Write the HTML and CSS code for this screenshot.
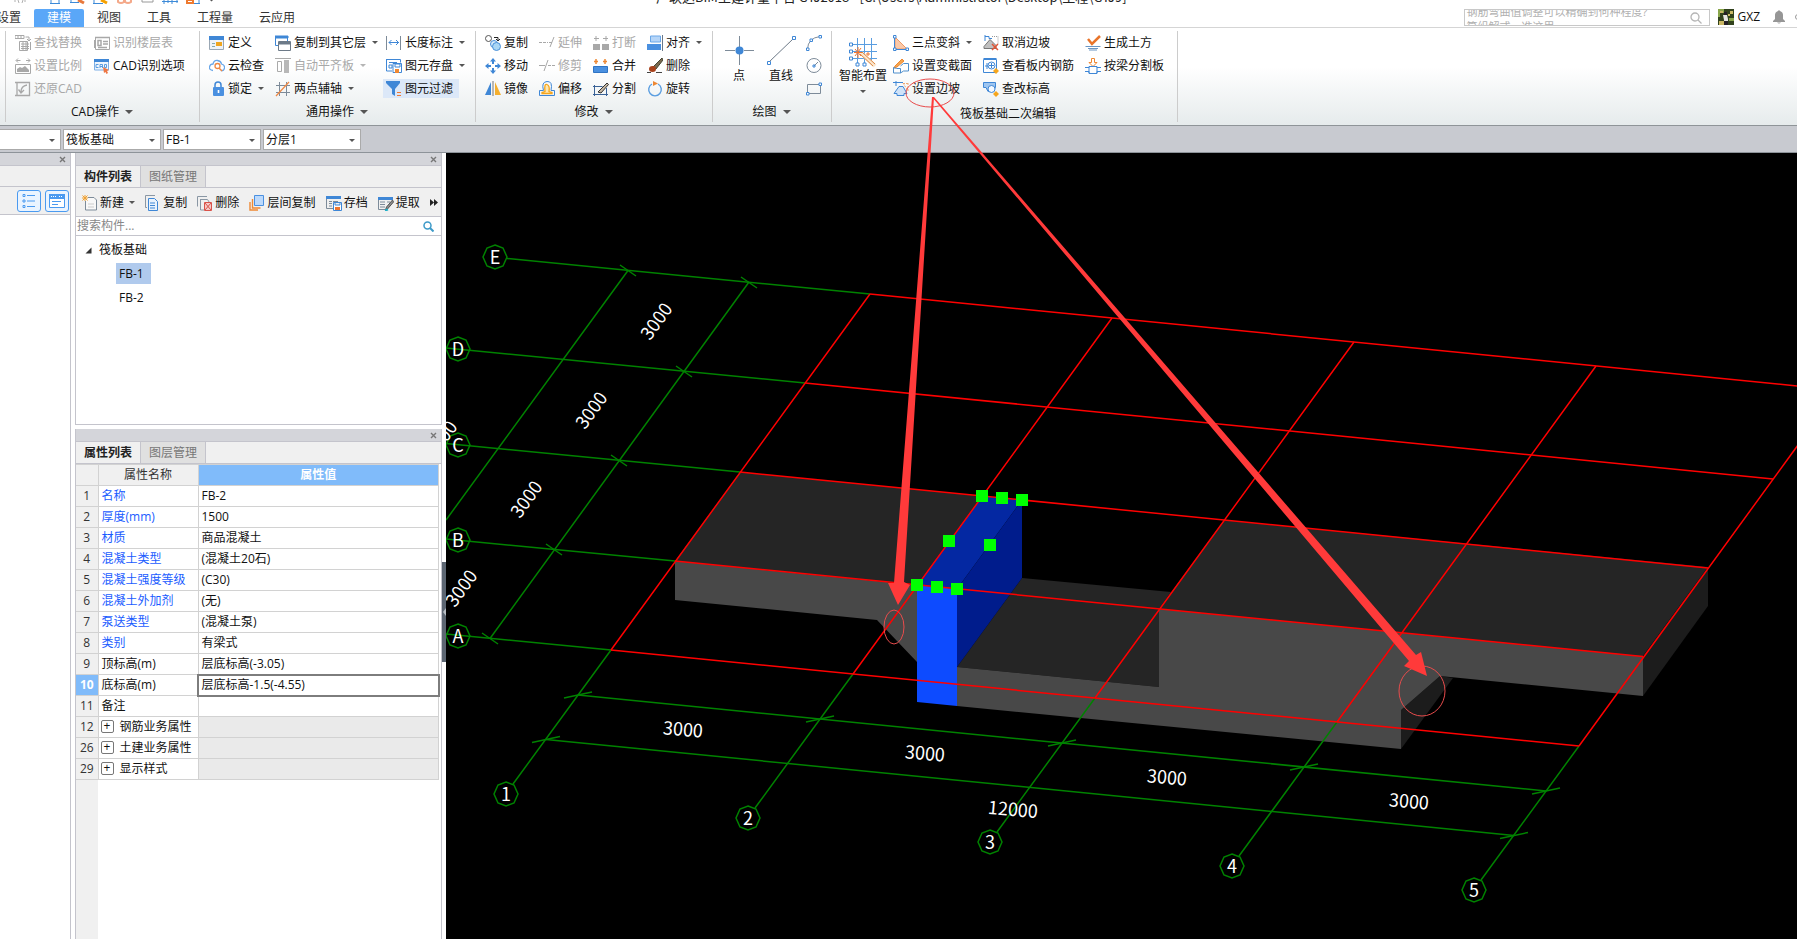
FILE: index.html
```
<!DOCTYPE html>
<html lang="zh-CN">
<head>
<meta charset="utf-8">
<title>广联达BIM土建计量平台 GTJ2018</title>
<link rel="stylesheet" href="styles.css">
</head>
<body>
<header class="titlebar">
  <svg class="quick" width="220" height="5" viewBox="0 0 220 5" aria-hidden="true">
    <g fill="none" stroke="#b0b0b0"><path d="M15 0v2M18 0l1 3M22 3l1-3M25 0v2"/></g>
    <g stroke="#3c8ad8" fill="none"><path d="M50 3.500h10M51 0v3M59 0v3M70 2.500h9M71 0v2M93 3.500h10M94 0v3M162 1.500h16M164 0v4M168 0v3M172 0v4M177 0v3M193 3.500h7M199 0v3"/></g>
    <path d="M78 0l6 3" stroke="#e8783a" stroke-width="3"/><path d="M101 0l6 3" stroke="#f5a000" stroke-width="3"/>
    <path d="M118 0v2q3 2 6 0v-2M125 0v2q3 2 6 0v-2" stroke="#f4a98a" fill="none" stroke-width="2"/>
    <path d="M142 0v2h11v-2" stroke="#999" fill="none"/><path d="M186 0h8v4h-8z" fill="#ee7a30"/><path d="M188 1.500h4" stroke="#fff"/><path d="M210 0h3l-1.500 1.500z" fill="#555"/>
  </svg>
  <span class="window-title">广联达BIM土建计量平台 GTJ2018 - [C:\Users\Administrator\Desktop\工程\GTJ9]</span>
</header>
<div class="menubar">
  <nav class="tabs">
    <button>设置</button><button class="on">建模</button><button>视图</button><button>工具</button><button>工程量</button><button>云应用</button>
  </nav>
  <div class="account">
    <div class="help"><input type="text" aria-label="搜索帮助"><span class="ticker">钢筋弯曲值调整可以精确到何种程度?<br>算组解式，准这里</span>
      <svg width="12" height="12" viewBox="0 0 12 12" fill="none" stroke="#b5b5b5" stroke-width="1.300"><circle cx="5" cy="5" r="4"/><path d="M8 8l3.500 3.500"/></svg></div>
    <svg class="avatar" width="16" height="16" viewBox="0 0 16 16"><rect width="16" height="16" fill="#31421c"/><path d="M0 0h6v4H2v4H0zM11 9h5v3h-5z" fill="#89a64a"/><path d="M2 2h3v2H2zM12 2h3v3h-3zM1 12h5v4H1zM10 5h2v2h-2z" fill="#c9b765"/><path d="M5 6h4l1 4v6H6v-5z" fill="#e7e7e2"/><path d="M6 3h3v3H6zM6 12h4v4H6z" fill="#252026"/></svg>
    <button class="user">GXZ</button>
    <svg class="bell" width="12" height="14" viewBox="0 0 12 14" fill="#969696"><path d="M6 0l1 1q3 1 3 4v4l2 2v1H0v-1l2-2V5q0-3 3-4zM4 12.500h4q-2 2-4 0z"/></svg>
    <svg class="edge" width="2" height="6" viewBox="0 0 2 6"><circle cx="3" cy="3" r="2.500" fill="none" stroke="#999"/></svg>
  </div>
</div>

<div class="ribbon">
  <section class="group g-cad">
    <div class="cmds">
      <button disabled><svg class="ic" viewBox="0 0 16 16" fill="none" stroke="#a8a8a8"><path d="M0 .5h9v3H0zM3 1v2M6 1v2M10.500 2h3.500v3M12 4l2 2 2-2M4.500 6.500h8v9h-8zM6 9h8M6 11.500h8M6 13.500h8M8 7v8M11 7v8M15.500 7v8"/></svg>查找替换</button>
      <button disabled><svg class="ic" viewBox="0 0 16 16" fill="none" stroke="#a8a8a8"><path d="M1.500 2.500h14v12h-14z"/><path d="M1 2.500h15M4 5.500h3v5H4zM9 6.500h5M9 9h5M4 12.500h9" stroke-width="1.500"/><path d="M0 5v8" stroke-width="2"/></svg>识别楼层表</button>
      <button disabled><svg class="ic" viewBox="0 0 16 16" fill="none" stroke="#a8a8a8"><path d="M1.500 2.500h4M3 .5L1 2.500l2 2M15 2.500h-4M13 .5l2 2-2 2M.5 6.500h15v9H.5z"/><path d="M2 14v-3l3-2 2 1 3-2 4 4v2z" fill="#a8a8a8" stroke="none"/></svg>设置比例</button>
      <button><svg class="ic" viewBox="0 0 16 16"><path d="M.5 4v8h14V4" fill="#eef5fd" stroke="#7fb0e6"/><path d="M0 1h15v3H0z" fill="#3f87d6"/><path d="M4.500 6.500H2v3h2.500M6 10V6.500h2.500V10M6 8.500h2.500M10.500 6.500h2v3h-2z" fill="none" stroke="#5a9de0"/><path d="M9 9l6 3-2 1 1 2-1.500 1-1-2-1.500 1z" fill="#ee7744"/></svg>CAD识别选项</button>
      <button disabled><svg class="ic" viewBox="0 0 16 16" fill="none" stroke="#a8a8a8"><path d="M2 1.500h12.500v13H2zM0 1.500h2M0 14.500h2M12 4q-6 1-6 7M3.500 8.500L6 12l3-3" stroke-width="1.300"/></svg>还原CAD</button>
    </div>
    <button class="label">CAD操作<i class="dd"></i></button>
  </section>
  <section class="group g-common">
    <div class="cmds">
      <button><svg class="ic" viewBox="0 0 16 16"><path d="M.5 1.500h14v13H.5z" fill="#eef2f6" stroke="#9aa7b4"/><path d="M0 1h15v4H0z" fill="#3f87d6"/><path d="M3 8.500h3M3 11.500h3" stroke="#8aa"/><path d="M7 7h6v4H7z" fill="#f0a51c"/></svg>定义</button>
      <button><svg class="ic" viewBox="0 0 16 16" fill="#fff" stroke="#6d7a88"><path d="M.5 1.500h12v9H.500z" stroke="#3f87d6"/><path d="M0 1h13v2H0z" fill="#3f87d6" stroke="#3f87d6"/><path d="M3.500 6.500h12v9h-12z"/><path d="M4 7h11v2H4z" fill="#6d7a88"/></svg>复制到其它层<i class="dd"></i></button>
      <button><svg class="ic" viewBox="0 0 16 16" fill="none" stroke="#3f87d6"><path d="M.5 1v14M14.500 1v14" stroke="#7d8b99"/><path d="M3 7.500h10M5.500 5L3 7.500 5.500 10M10 5l2.500 2.500L10 10"/></svg>长度标注<i class="dd"></i></button>
      <button><svg class="ic" viewBox="0 0 16 16" fill="none"><path d="M4 12.500Q0 12 .5 9T4 6q1-4 4.500-3.500T12.500 6Q16 7 15.500 10T12 12.500" stroke="#6aa7e8" stroke-width="1.300"/><circle cx="8.500" cy="8" r="2.500" stroke="#ee8844" stroke-width="1.300"/><path d="M10 10l3 3" stroke="#ee8844" stroke-width="1.500"/></svg>云检查</button>
      <button disabled><svg class="ic" viewBox="0 0 16 16"><path d="M0 .5h16" stroke="#aaa"/><path d="M2.500 3.500h4v10h-4z" fill="none" stroke="#aaa"/><path d="M9 2h5v13H9z" fill="#b8b8b8"/></svg>自动平齐板<i class="dd"></i></button>
      <button><svg class="ic" viewBox="0 0 16 16" fill="none" stroke="#3f87d6"><path d="M.5 1.500h14v3M.5 1v12H6M3 4.500h8M3 7v3h3V7z"/><path d="M7 5.500h8.500v9H7z" fill="#fff"/><path d="M9 6h5v3H9z"/><path d="M9 11h4v4H9z" fill="#ee8833" stroke="none"/></svg>图元存盘<i class="dd"></i></button>
      <button><svg class="ic" viewBox="0 0 16 16"><path d="M6 7V4q0-3 3-3t3 3v3" fill="none" stroke="#3f87d6" stroke-width="1.500"/><rect x="4" y="6" width="11" height="9" rx="1" fill="#4a90e0"/><path d="M9.500 9v3" stroke="#fff" stroke-width="1.600"/></svg>锁定<i class="dd"></i></button>
      <button><svg class="ic" viewBox="0 0 16 16" fill="none" stroke="#7d8b99"><path d="M4.500 1v14M11.500 1v14M1 4.500h14M1 11.500h14"/><path d="M1 15L14 1" stroke="#ee8844" stroke-width="1.300"/></svg>两点辅轴<i class="dd"></i></button>
      <button class="sel"><svg class="ic" viewBox="0 0 16 16" fill="#3f87d6"><path d="M0 0h14v2L9 8v7l-3-2V8L0 2z"/><path d="M11 11.500h4M11 14.500h4" stroke="#ee7733"/></svg>图元过滤</button>
    </div>
    <button class="label">通用操作<i class="dd"></i></button>
  </section>
  <section class="group g-edit">
    <div class="cmds">
      <button><svg class="ic" viewBox="0 0 16 16" fill="none" stroke="#555"><circle cx="3.500" cy="3.500" r="3"/><path d="M9 2.500h4v3M11 4l2 2 2-2" stroke="#222"/><circle cx="9" cy="9" r="3.500" stroke="#4a90d9" fill="#d8ecfb"/><circle cx="11.500" cy="11.500" r="4" stroke="#4a90d9" fill="#a9d6f4"/></svg>复制</button>
      <button disabled><svg class="ic" viewBox="0 0 16 16" fill="none" stroke="#a8a8a8"><path d="M0 7.500h9" stroke-dasharray="3 1"/><path d="M10 7.500h3M15 2l-4 10"/></svg>延伸</button>
      <button disabled><svg class="ic" viewBox="0 0 16 16" fill="#a8a8a8"><path d="M0 9h7v6H0zM9 9h7v6H9z"/><path d="M1 3.500h5M3 1v5M10 3.500h5M13 1v5" stroke="#a8a8a8"/></svg>打断</button>
      <button><svg class="ic" viewBox="0 0 16 16"><path d="M3.500 1h10v6h-10z" fill="#b5d5f8" stroke="#6aa7e8"/><path d="M0 9h14v6H0z" fill="#4a90e0"/><path d="M15.500 0v16" stroke="#68788a"/></svg>对齐<i class="dd"></i></button>
      <button><svg class="ic" viewBox="0 0 16 16" fill="#3f87d6"><path d="M8 0l3 3.500H9V6H7V3.500H5zM8 16l3-3.500H9V10H7v2.500H5zM0 8l3.500-3v2H6v2H3.500v2zM16 8l-3.500-3v2H10v2h2.500v2z"/></svg>移动</button>
      <button disabled><svg class="ic" viewBox="0 0 16 16" fill="none" stroke="#a8a8a8"><path d="M0 7.500h6M9 2L5 13"/><path d="M9 7.500h7" stroke-dasharray="3 1"/></svg>修剪</button>
      <button><svg class="ic" viewBox="0 0 16 16"><path d="M.5 8.500h14v6H.5z" fill="#4a90e0" stroke="#2f74c4"/><path d="M1 3.500h4M3 1v5M10 3.500h4M12 1v5" stroke="#ee8833" stroke-width="1.500"/></svg>合并</button>
      <button><svg class="ic" viewBox="0 0 16 16"><path d="M15 0l1 2-7 9-3-2z" fill="#7a6a50" stroke="#443"/><ellipse cx="5.500" cy="11" rx="3.500" ry="3" fill="#a8421c"/><path d="M0 14.500h4M9 14.500h6" stroke="#444"/></svg>删除</button>
      <button><svg class="ic" viewBox="0 0 16 16"><path d="M6 1v13H0z" fill="#3f87d6"/><path d="M10 1v13h6z" fill="#f5b030"/><path d="M8 0v15" stroke="#777"/></svg>镜像</button>
      <button><svg class="ic" viewBox="0 0 16 16" fill="none" stroke="#3f87d6"><path d="M.5 14.500v-5h4Q2 1 8 .500t4 9h3.500v5z"/><path d="M3 12.500h10v-1l-3-1q1-6-2-7T6 10.500l-3 1z" fill="#ffe7b0" stroke="#f5a51c" stroke-width="1.300"/></svg>偏移</button>
      <button><svg class="ic" viewBox="0 0 16 16" fill="none" stroke="#3a6297"><path d="M1.500 5.500h8M1.500 4v11M0 13.500h15M13.500 7v8M0 5.500h2"/><path d="M5 11l9-9 1.500 1.500L8 12z" fill="#c6b8a4" stroke="#333"/></svg>分割</button>
      <button><svg class="ic" viewBox="0 0 16 16" fill="none"><path d="M11 3a6.300 6.300 0 1 1-6 0" stroke="#5a9de0" stroke-width="1.400"/><path d="M6 0l5 2.500L6 5z" fill="#ee8833"/></svg>旋转</button>
    </div>
    <button class="label">修改<i class="dd"></i></button>
  </section>
  <section class="group g-draw">
    <div class="big-row">
      <button class="big"><svg width="30" height="34" viewBox="0 0 30 34"><path d="M15.500 2v29M1 16.500h10M20 16.500h10" stroke="#7d8b99"/><circle cx="15.500" cy="16.500" r="4" fill="#3f87d6"/></svg>点</button>
      <button class="big"><svg width="30" height="34" viewBox="0 0 30 34" fill="none"><path d="M3 28L27 5" stroke="#6d7a88"/><path d="M1.500 27.500h3v3h-3zM26.500 2.500h3v3h-3z" fill="#fff" stroke="#3f87d6"/></svg>直线</button>
      <div class="minis">
        <button aria-label="弧"><svg class="ic" viewBox="0 0 16 16" fill="none"><path d="M1.500 14Q2 3 14 1.500" stroke="#7d8b99"/><path d="M.5 13h2.500v2.500H.5zM4 4h2.500v2.500H4zM13 .5h2.500V3H13z" fill="#fff" stroke="#3f87d6"/></svg></button>
        <button aria-label="圆"><svg class="ic" viewBox="0 0 16 16" fill="none"><circle cx="8" cy="7.500" r="7" stroke="#7d8b99"/><path d="M8 8l4-4" stroke="#7d8b99"/><path d="M7 7h2v2H7z" stroke="#3f87d6"/></svg></button>
        <button aria-label="矩形"><svg class="ic" viewBox="0 0 16 16" fill="none"><path d="M1.500 3.500h13v9h-13z" stroke="#7d8b99"/><path d="M.5 11.500h2.500V14H.5zM13 2h2.500v2.500H13z" fill="#fff" stroke="#3f87d6"/></svg></button>
      </div>
    </div>
    <button class="label">绘图<i class="dd"></i></button>
  </section>
  <section class="group g-raft">
    <div class="big-row">
      <button class="big"><svg width="32" height="34" viewBox="0 0 32 34" fill="none"><path d="M5 10.500h25M5 17.500h25M5 24.500h25M10.500 4v25M17.500 4v25M24.500 4v25" stroke="#5a9de0"/><path d="M2.500 9h3v3h-3zM2.500 16h3v3h-3zM2.500 23h3v3h-3zM9 29h3v3H9zM16 29h3v3h-3z" fill="#fff" stroke="#3f87d6"/><path d="M14 19l14 13" stroke="#fbe6cc" stroke-width="4"/><path d="M13 20l13 12M15 18l13 12" stroke="#dd8844"/><path d="M8 15l6 7M14 14l-6 8M7 18.500h8M11 13v11M19 20h4M21 18v4" stroke="#ee7733"/></svg>智能布置<i class="dd"></i></button>
      <div class="cmds">
        <button><svg class="ic" viewBox="0 0 16 16"><path d="M2 2v12h12z" fill="#fbc9a8" stroke="#ee9966"/><path d="M.5.500H3V3H.500zM.5 13H3v2.500H.500zM13 13h2.500v2.500H13zM1.500 3v10M3 14.500h10" fill="#fff" stroke="#3f87d6"/></svg>三点变斜<i class="dd"></i></button>
        <button><svg class="ic" viewBox="0 0 16 16" fill="none" stroke="#3f87d6"><path d="M2 1.500h4v2h3M2 0v6"/><path d="M1 11.500l6-7 6 6v3H1z" fill="#c0c0c0" stroke="#777"/><path d="M9 1.500h6v8" stroke="#999" stroke-dasharray="1 1"/><path d="M9 9l6 6M15 9l-6 6" stroke="#e05535" stroke-width="1.500"/></svg>取消边坡</button>
        <button><svg class="ic" viewBox="0 0 16 16" fill="none"><path d="M3 4l4 5 8-8" stroke="#e8742a" stroke-width="2.500"/><path d="M.5 11.500h15M3 13.500h10M4 15h8" stroke="#6a96c4"/></svg>生成土方</button>
        <button><svg class="ic" viewBox="0 0 16 16" fill="none"><path d="M2 8l7-7 2 2-7 6-3 1z" stroke="#ee8833" fill="#f5a64d"/><path d="M.5 9.500l3 1h4V15H.5zM7.500 8l3-2.500h5V13h-5l-3 2" stroke="#4f8fcc"/></svg>设置变截面</button>
        <button><svg class="ic" viewBox="0 0 16 16" fill="none" stroke="#3f87d6"><path d="M.5 1.500h13v13H.5zM.5 .5h13M4 5v6M2 8h4"/><circle cx="8.500" cy="7.500" r="3.500" fill="#fff"/><path d="M8.500 5v5M6 7.500h5"/><path d="M13 10l3 3-3 3-3-3z" fill="#f5a51c" stroke="none"/></svg>查看板内钢筋</button>
        <button><svg class="ic" viewBox="0 0 16 16" fill="none"><path d="M6.500 1v3.500H4l4 4 4-4H9.500V.5h-3z" stroke="#ee8833"/><path d="M0 9.500h4v-1h8v1h4M0 13.500h4v2h8v-2h4M4 9v6M12 9v6" stroke="#3f87d6"/></svg>按梁分割板</button>
        <button><svg class="ic" viewBox="0 0 16 16" fill="none" stroke="#3f87d6"><path d="M0 1.500h10M3 0v5"/><path d="M1 12.500l5-7h4l4 7h-3v2H4v-2z" fill="#d0e3f8"/><path d="M10 2l5 8M10 2.500h6M15 2v8" stroke="#eeaa77" stroke-dasharray="2 1"/></svg>设置边坡</button>
        <button><svg class="ic" viewBox="0 0 16 16" fill="none" stroke="#3f87d6"><path d="M.5 1.500h12v5l-3 4H5l-2-4H.5z" fill="#9fc6f0"/><circle cx="8.500" cy="8" r="3.500" fill="#f4f9ff"/><path d="M13 10l3 3-3 3-3-3z" fill="#f5a51c" stroke="none"/></svg>查改标高</button>
      </div>
    </div>
    <span class="label">筏板基础二次编辑</span>
  </section>
</div>

<div class="selectors">
  <div class="combo first"><select aria-label="楼层"><option></option></select></div>
  <div class="combo"><select aria-label="构件类型"><option>筏板基础</option></select></div>
  <div class="combo"><select aria-label="构件"><option>FB-1</option></select></div>
  <div class="combo"><select aria-label="分层"><option>分层1</option></select></div>
</div>

<main class="workspace">
  <aside class="nav-panel">
    <div class="strip"><button aria-label="关闭"><svg width="7" height="7" viewBox="0 0 7 7"><path d="M1 1l5 5M6 1L1 6" stroke="#777" stroke-width="1.400"/></svg></button></div>
    <div class="nav-head"></div>
    <div class="nav-tools">
      <button aria-label="列表"><svg width="14" height="14" viewBox="0 0 14 14" fill="none" stroke="#4a9af0"><path d="M1 .5h2v2H1zM1 6h2v2H1zM1 11.500h2v2H1zM5 1.500h8M5 7h8M5 12.500h8"/></svg></button>
      <button aria-label="卡片"><svg width="16" height="14" viewBox="0 0 16 14" fill="none" stroke="#4a9af0"><path d="M.5 .5h15v13H.5z" fill="#fff"/><path d="M0 0h16v5H0z" fill="#4a9af0" stroke="none"/><path d="M2 2.500h5M10 2.500h3" stroke="#fff" stroke-dasharray="1 1"/><path d="M3 7.500h9M3 10.500h6"/></svg></button>
    </div>
  </aside>

  <div class="docks">
    <section class="dock dock-list">
      <div class="strip"><button aria-label="关闭"><svg width="7" height="7" viewBox="0 0 7 7"><path d="M1 1l5 5M6 1L1 6" stroke="#777" stroke-width="1.400"/></svg></button></div>
      <div class="dock-tabs"><button class="on">构件列表</button><button>图纸管理</button></div>
      <div class="dock-tools">
        <button><svg class="ic" viewBox="0 0 16 16" fill="none" stroke="#7d8b99"><path d="M6 2.500h6l2.500 2.500v10h-11V6" fill="#f8f8f8"/><path d="M6 9h6M6 12h6" stroke="#ccc"/><path d="M.5 .5l5 5M5.500.5l-5 5M3 0v6M0 3h6" stroke="#f0a030"/></svg>新建<i class="dd"></i></button>
        <button><svg class="ic" viewBox="0 0 16 16" fill="none" stroke="#3f87d6"><path d="M10 .5H.5v12H2" stroke="#8a97a4"/><path d="M3.500 3.500h6l3 3v9h-9z" fill="#e8f2fd"/><path d="M5 8h5M5 10.500h5M5 13h5"/></svg>复制</button>
        <button><svg class="ic" viewBox="0 0 16 16" fill="none" stroke="#8a97a4"><path d="M10 1.500H.5v10M3.500 4.500h7l2 3M3.500 4v11H7"/><path d="M7.500 7.500h7v8h-7z" fill="#f7c9c6" stroke="#d9534a"/><path d="M8 8l6 7M14 8l-6 7" stroke="#d9534a"/></svg>删除</button>
        <button><svg class="ic" viewBox="0 0 16 16" fill="none"><path d="M5.500 .5h9v10h-9z" fill="#bcd9fb" stroke="#4a90e0"/><path d="M3.500 4v9h8M1 7v8h8" stroke="#ee8833" stroke-width="1.400"/></svg>层间复制</button>
        <button><svg class="ic" viewBox="0 0 16 16" fill="none" stroke="#7d8b99"><path d="M.5 1v12.500H7M3 6.500h3M3 8.500h3M3 11h3M7 6.500h5"/><path d="M0 1h15v3H0z" fill="#3f87d6" stroke="none"/><path d="M7.500 7.500h8v8h-8zM9 8v2h5V8" fill="#fff" stroke="#3f87d6"/><path d="M9 12h5v3H9z" fill="#ee7733" stroke="none"/></svg>存档</button>
        <button><svg class="ic" viewBox="0 0 16 16" fill="none" stroke="#7d8b99"><path d="M.5 3v11.500H8M2 7h5M2 9.500h5M2 12h5M9 7h3"/><path d="M0 2h15v3H0z" fill="#3f87d6" stroke="none"/><path d="M14.500 5l1 2-6 7-2 1 1-3z" fill="#8b8b8b" stroke="#555"/><path d="M7 15.500l3-1" stroke="#20b0c8" stroke-width="2"/></svg>提取</button>
        <button class="more" aria-label="更多"><svg width="8" height="7" viewBox="0 0 8 7" fill="#222"><path d="M0 0l4 3.500L0 7zM4 0l4 3.500L4 7z"/></svg></button>
      </div>
      <label class="search"><input type="text" placeholder="搜索构件..." aria-label="搜索构件"><svg width="11" height="11" viewBox="0 0 11 11" fill="none" stroke="#3d9ac8"><circle cx="4.500" cy="4.500" r="3.500" stroke-width="1.500"/><path d="M7 7l3.500 3.500" stroke-width="2"/></svg></label>
      <ul class="tree">
        <li><svg width="7" height="7" viewBox="0 0 7 7"><path d="M6.500 .5v6h-6z" fill="#333"/></svg><span>筏板基础</span>
          <ul><li><button class="picked">FB-1</button></li><li><button>FB-2</button></li></ul>
        </li>
      </ul>
    </section>

    <section class="dock dock-props">
      <div class="strip"><button aria-label="关闭"><svg width="7" height="7" viewBox="0 0 7 7"><path d="M1 1l5 5M6 1L1 6" stroke="#777" stroke-width="1.400"/></svg></button></div>
      <div class="dock-tabs"><button class="on">属性列表</button><button>图层管理</button></div>
      <div class="props-body">
      <table class="props">
        <colgroup><col class="c-num"><col class="c-name"><col></colgroup>
        <thead><tr><th></th><th>属性名称</th><th class="hot">属性值</th></tr></thead>
        <tbody>
          <tr><th>1</th><td class="blue">名称</td><td>FB-2</td></tr>
          <tr><th>2</th><td class="blue">厚度(mm)</td><td>1500</td></tr>
          <tr><th>3</th><td class="blue">材质</td><td>商品混凝土</td></tr>
          <tr><th>4</th><td class="blue">混凝土类型</td><td>(混凝土20石)</td></tr>
          <tr><th>5</th><td class="blue">混凝土强度等级</td><td>(C30)</td></tr>
          <tr><th>6</th><td class="blue">混凝土外加剂</td><td>(无)</td></tr>
          <tr><th>7</th><td class="blue">泵送类型</td><td>(混凝土泵)</td></tr>
          <tr><th>8</th><td class="blue">类别</td><td>有梁式</td></tr>
          <tr><th>9</th><td>顶标高(m)</td><td>层底标高(-3.05)</td></tr>
          <tr class="current"><th>10</th><td>底标高(m)</td><td>层底标高-1.5(-4.55)</td></tr>
          <tr><th>11</th><td>备注</td><td></td></tr>
          <tr class="fold"><th>12</th><td><button aria-label="展开">+</button>钢筋业务属性</td><td></td></tr>
          <tr class="fold"><th>26</th><td><button aria-label="展开">+</button>土建业务属性</td><td></td></tr>
          <tr class="fold"><th>29</th><td><button aria-label="展开">+</button>显示样式</td><td></td></tr>
        </tbody>
      </table>
      </div>
    </section>
  </div>

  <div class="splitter"><button aria-label="收起"><svg width="4" height="8" viewBox="0 0 4 8"><path d="M4 0v8L1 4z" fill="#b8bec4"/></svg></button></div>

  <div class="viewport">
    <svg viewBox="446 153 1351 786" preserveAspectRatio="xMinYMin slice">
      <polygon points="675,561 740,472 982,496 917,585" fill="#252525"/>
      <polygon points="1159,609 1224,520 1708,567 1643,656" fill="#252525"/>
      <polygon points="957,667 1022,578 1171,592 1159,609 1159,687" fill="#252525"/>
      <polygon points="1708,567 1708,606 1643,696 1643,656" fill="#1c1c1c"/>
      <polygon points="1440,676 1453,678 1401,749 1401,710" fill="#1c1c1c"/>
      <polygon points="675,561 917,585 917,662 877,620 675,600" fill="#484848"/>
      <polygon points="957,667 1159,687 1159,609 1643,656 1643,696 1440,676 1401,710 1401,749 957,706" fill="#484848"/>
      <polygon points="917,585 982,496 1022,500 957,589" fill="#0428a2"/>
      <polygon points="1022,500 1022,578 957,667 957,589" fill="#001c8c"/>
      <polygon points="917,585 957,589 957,706 917,702" fill="#0d4bff"/>
      <g class="axis">
        <path d="M507 258.500L870 294M446 348L805 383M446 443.500L740 472M446 539L675 561M446 634L611 650"/>
        <path d="M628 270.500L446 520M749 282L490 638.500"/>
        <path d="M611 650L513 784M853 674L755 808M1095 698L997 832M1337 722L1239 856M1579 746L1481 880"/>
        <path d="M578 695L1546 791M546 739.500L1514 835.500"/>
        <path d="M620 265l16 11M741 277l16 11M676 366l16 11M611 455l16 11M546 544l16 11M482 633l16 11"/>
        <path d="M564 698l28-6M806 722l28-6M1048 746l28-6M1290 770l28-6M1532 794l28-6M532 742.500l28-6M1500 838.500l28-6"/>
      </g>
      <g class="grid">
        <path d="M870 294L1838 390M805 383L1773 479M740 472L1708 568M675 561L1643 656.500M611 650L1579 746"/>
        <path d="M611 650L870 294M853 674L1112 318M1095 698L1354 342M1337 722L1596 366M1579 746L1838 390"/>
      </g>
      <g class="axis">
        <path id="b" d="M495 245l8 3 4 9-4 9-8 3-8-3-4-9 4-9z"/>
        <use href="#b" x="-37" y="92"/><use href="#b" x="-37" y="188"/><use href="#b" x="-37" y="283"/><use href="#b" x="-37" y="379"/>
        <use href="#b" x="11" y="537"/><use href="#b" x="253" y="561"/><use href="#b" x="495" y="585"/><use href="#b" x="737" y="609"/><use href="#b" x="979" y="633"/>
      </g>
      <g class="marks">
        <text x="495" y="264">E</text><text x="458" y="356">D</text><text x="458" y="452">C</text><text x="458" y="547">B</text><text x="458" y="643">A</text>
        <text x="506" y="801">1</text><text x="748" y="825">2</text><text x="990" y="849">3</text><text x="1232" y="873">4</text><text x="1474" y="897">5</text>
        <text transform="translate(656 321) rotate(-54)" y="7">3000</text><text transform="translate(591 410) rotate(-54)" y="7">3000</text><text transform="translate(526 499) rotate(-54)" y="7">3000</text><text transform="translate(461 588) rotate(-54)" y="7">3000</text><text transform="translate(438 443) rotate(-54)" y="7">12000</text>
        <text transform="translate(683 729) rotate(5)" y="7">3000</text><text transform="translate(925 753) rotate(5)" y="7">3000</text><text transform="translate(1167 777) rotate(5)" y="7">3000</text><text transform="translate(1409 801) rotate(5)" y="7">3000</text><text transform="translate(1013 809) rotate(5)" y="7">12000</text>
      </g>
      <path class="grips" d="M976 490h12v12h-12zM996 492h12v12h-12zM1016 494h12v12h-12zM943 535h12v12h-12zM984 539h12v12h-12zM911 579h12v12h-12zM931 581h12v12h-12zM951 583h12v12h-12z"/>
    </svg>
  </div>
</main>

<svg class="notes" width="1797" height="939" viewBox="0 0 1797 939" aria-hidden="true">
  <g fill="none" stroke="#e84c4c"><ellipse cx="930" cy="93" rx="24" ry="14"/><ellipse cx="894" cy="627" rx="10" ry="17"/><ellipse cx="1422" cy="691" rx="23" ry="25"/></g>
  <g fill="#ff3a3a"><polygon points="932,97 934,97 904,582 910,585 898,605 888,583 894,583"/><polygon points="932,97 934,97 1416,655 1421,652 1427,676 1404,666 1409,661"/></g>
</svg>
</body>
</html>
```
FILE: styles.css
```
* { box-sizing: border-box; }

body {
  margin: 0;
  min-height: 100vh;
  display: flex;
  flex-direction: column;
  position: relative;
  overflow: hidden;
  background: #fff;
  color: #111;
  font: 12px/16px "Open Sans", "Noto Sans CJK SC", sans-serif;
}

button, input, select {
  margin: 0;
  padding: 0;
  border: 0;
  background: none;
  color: inherit;
  font: inherit;
}

svg { display: block; flex: none; }
.ic { width: 16px; height: 16px; }

.dd {
  flex: none;
  border: 3px solid transparent;
  border-top-color: #555;
  border-bottom: 0;
}

/* Title and menu */
.titlebar { display: flex; align-items: flex-end; height: 5px; overflow: hidden; }
.titlebar .quick { width: 220px; }
.window-title { margin-left: 436px; font-family: "Noto Sans CJK SC", sans-serif; font-size: 13px; line-height: 17px; color: #222; white-space: nowrap; }

.menubar { display: flex; justify-content: space-between; height: 23px; border-bottom: 1px solid #d5d5d5; }
.tabs { display: flex; margin: 4px 0 0 -16px; }
.tabs button { padding: 0 13px; color: #333; }
.tabs .on { background: #5aa7f8; color: #fff; border-radius: 2px 2px 0 0; }

.account { display: flex; align-items: center; padding-top: 2px; }
.help { position: relative; display: flex; width: 246px; height: 17px; border: 1px solid #c8c8c8; overflow: hidden; margin-right: 8px; }
.help input { width: 100%; }
.help .ticker { position: absolute; left: 1px; top: -6px; font-size: 11px; line-height: 15px; color: #b0b0b0; white-space: nowrap; pointer-events: none; }
.help svg { position: absolute; right: 7px; top: 2px; }
.user { margin: 0 13px 0 3px; }
.edge { margin-left: 10px; }

/* Ribbon */
.ribbon {
  display: flex;
  height: 98px;
  padding: 3px 0 0 5px;
  background: linear-gradient(#fff 40%, #e6ebec);
  border-bottom: 1px solid #8f9498;
}
.group { display: flex; flex-direction: column; border-right: 1px solid #ccc; height: 91px; padding-left: 9px; }
.group:first-child { border-left: 1px solid #ccc; }
.cmds { display: grid; grid-auto-rows: 23px; align-items: center; justify-items: start; }
.cmds button { display: flex; align-items: center; gap: 3px; height: 19px; white-space: nowrap; }
.cmds .dd { margin-left: 3px; }
.cmds button:disabled { color: #a8a8a8; }
.cmds button:disabled .dd { border-top-color: #b5b5b5; }
.cmds .sel { margin-left: -3px; padding: 0 6px 0 3px; background: #dce8f8; }
.label { display: flex; align-items: center; justify-content: center; gap: 6px; height: 25px; margin: 2px 0 0 -10px; }
.label .dd { border-width: 4px 4px 0; }

.g-cad { width: 195px; }
.g-cad .cmds { grid-template-columns: 79px 1fr; }
.g-common { width: 276px; }
.g-common .cmds { grid-template-columns: 66px 111px 1fr; }
.g-edit { width: 237px; }
.g-edit .cmds { grid-template-columns: 54px 54px 54px 1fr; }
.g-draw { width: 119px; }
.g-raft { width: 346px; padding-left: 7px; }
.g-raft .cmds { grid-template-columns: 90px 102px 1fr; }
.g-raft .label { margin: 5px 0 0; }

.big-row { display: flex; height: 69px; }
.big { display: flex; flex-direction: column; align-items: center; padding-top: 3px; }
.big .dd { margin-top: 6px; }
.g-draw .big { width: 34px; margin-right: 8px; }
.minis { display: grid; grid-auto-rows: 23px; align-items: center; }
.g-raft .big { width: 48px; margin-right: 6px; }

/* Component selectors */
.selectors { display: flex; gap: 2px; height: 27px; padding: 3px 0 2px; background: #c8cad0; border-bottom: 1px solid #8d9399; }
.combo { position: relative; width: 98px; border: 1px solid #aaa; background: #fff; }
.combo.first { width: 61px; border-left: 0; }
.combo select { appearance: none; width: 100%; height: 100%; padding-left: 2px; }
.combo::after { content: ""; position: absolute; right: 5px; top: 9px; border: 3px solid transparent; border-top-color: #555; border-bottom: 0; pointer-events: none; }

/* Panels */
.workspace { display: flex; flex: 1; min-height: 0; }
.nav-panel { width: 71px; border-right: 1px solid #c4c4cc; }
.strip { display: flex; justify-content: flex-end; align-items: center; height: 13px; padding-right: 4px; background: #d4d5da; border-bottom: 1px solid #c4c4cc; }
.nav-head { height: 21px; background: #f0f0f0; border-bottom: 1px solid #c4c4cc; }
.nav-tools { display: flex; justify-content: flex-end; gap: 4px; padding: 3px 1px 2px; background: #f0f0f0; border-bottom: 1px solid #c4c4cc; }
.nav-tools button { display: grid; place-items: center; width: 24px; height: 22px; border: 1px solid #4a9af0; border-radius: 3px; background: #eaf4ff; }

.docks { display: flex; flex-direction: column; gap: 4px; width: 367px; margin-left: 4px; }
.dock { border: 1px solid #c4c4cc; border-top: 0; }
.dock-list { height: 272px; display: flex; flex-direction: column; }
.dock-props { flex: 1; display: flex; flex-direction: column; border-bottom: 0; }
.dock-tabs { display: flex; height: 22px; background: #f0f0f0; border-bottom: 1px solid #c4c4cc; color: #777; }
.dock-tabs button { width: 65px; border-right: 1px solid #c4c4cc; background: #e0e0e0; }
.dock-tabs .on { background: #f0f0f0; color: #222; font-weight: 700; }
.dock-tools { display: flex; align-items: center; justify-content: space-between; height: 29px; padding: 1px 3px 0 6px; background: #f0f0f0; border-bottom: 1px solid #c4c4cc; }
.dock-tools button { display: flex; align-items: center; gap: 2px; white-space: nowrap; }
.dock-tools .dd { margin-left: 3px; }
.search { display: flex; align-items: center; height: 19px; padding: 0 7px 0 1px; border-bottom: 1px solid #c4c4cc; }
.search input { flex: 1; height: 16px; }
.search input::placeholder { color: #888; }
.tree, .tree ul { margin: 0; padding: 0; list-style: none; }
.tree { padding: 3px 0 0 9px; line-height: 21px; }
.tree > li > svg { display: inline-block; margin-right: 7px; }
.tree ul { padding-left: 31px; }
.tree ul li { height: 24px; padding-top: 3px; }
.tree ul button { display: block; width: 35px; padding-left: 3px; text-align: left; line-height: 21px; }
.tree .picked { background: #b0caed; }

.props-body { flex: 1; padding-right: 2px; background: linear-gradient(90deg, #f0f0f0 22px, #fff 22px); }
.props { width: 100%; table-layout: fixed; border-collapse: collapse; }
.c-num { width: 22px; }
.c-name { width: 100px; }
.props tr { height: 21px; }
.props th, .props td { height: 21px; padding: 0 0 0 3px; border: 1px solid #d2d2d2; line-height: 16px; text-align: left; white-space: nowrap; }
.props th { padding: 0; background: #f0f0f0; color: #333; font-weight: 400; text-align: center; }
.props th:first-child { border-left: 0; }
.props .hot, .props .current th { background: #80bbfa; color: #fff; font-weight: 700; }
.props .blue { color: #1a5cff; }
.props .current td:last-child { outline: 2px solid #7d7d7d; outline-offset: -1px; }
.props .fold td:last-child { background: #eaeaea; }
.props td button { width: 13px; height: 13px; margin: 0 6px 0 -1px; border: 1px solid #777; border-radius: 2px; line-height: 10px; vertical-align: 1px; }

.splitter { width: 4px; padding-top: 409px; }
.splitter button { display: block; height: 100px; background: #5c6672; }

/* 3D view */
.viewport { flex: 1; min-width: 0; background: #000; overflow: hidden; display: grid; }
.viewport > svg { width: 100%; height: 100%; min-height: 0; }
.axis { fill: none; stroke: #008200; stroke-width: 1.5; }
.grid { fill: none; stroke: #ff0000; stroke-width: 1.5; }
.marks { fill: #fff; text-anchor: middle; font-family: "Noto Sans CJK SC", sans-serif; font-size: 18px; }
.grips { fill: #00ff00; }

.notes { position: absolute; left: 0; top: 0; pointer-events: none; }
```
